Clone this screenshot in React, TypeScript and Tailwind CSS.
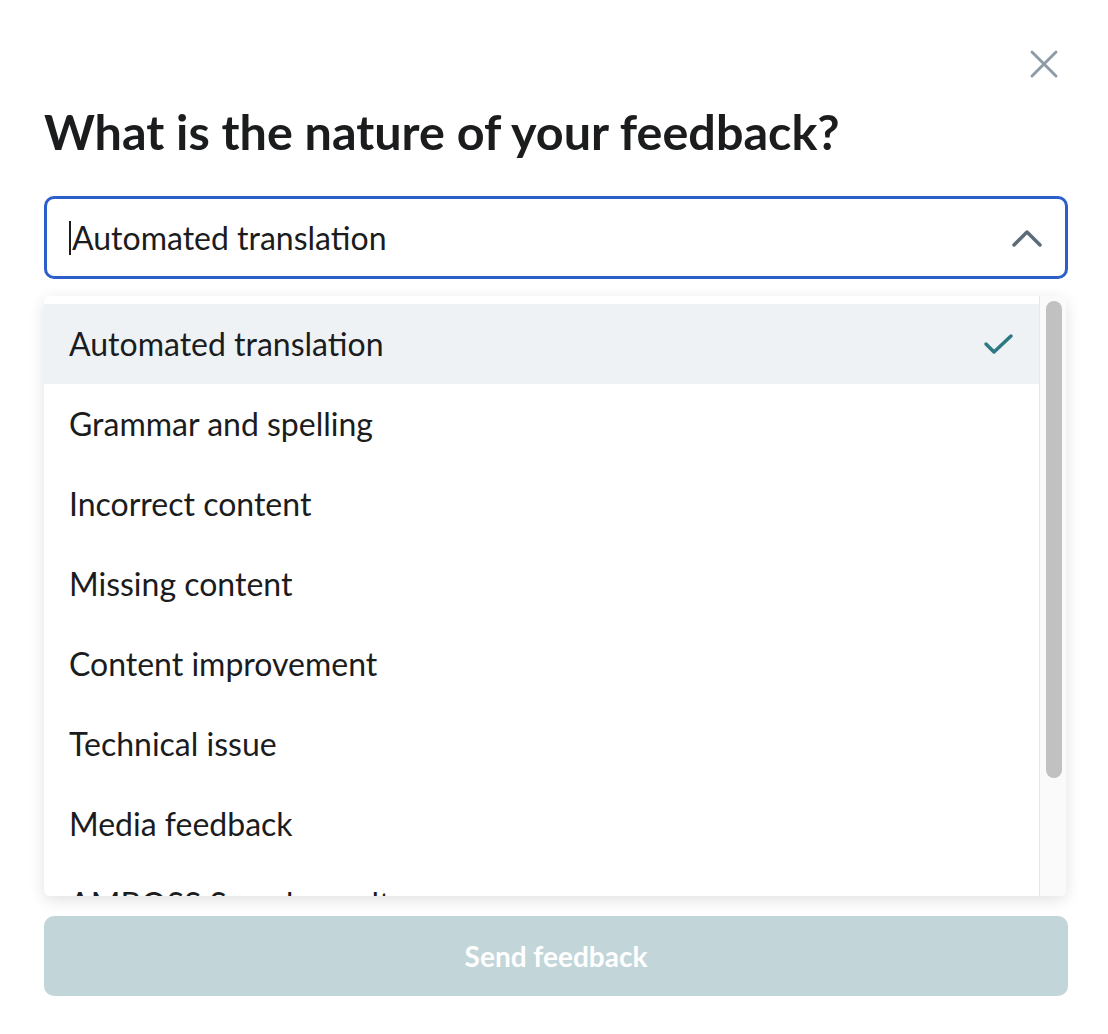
import React from "react";

const options = [
  "Automated translation",
  "Grammar and spelling",
  "Incorrect content",
  "Missing content",
  "Content improvement",
  "Technical issue",
  "Media feedback",
  "AMBOSS Search results",
];

export default function App() {
  return (
    <div
      className="w-[1108px] h-[1034px] bg-white relative overflow-hidden"
      style={{ fontFamily: "Lato, 'Noto Sans', sans-serif" }}
    >
      <div className="flex justify-end pt-[48px] pr-[48px]">
        <button className="w-[32px] h-[32px] flex items-center justify-center">
          <svg width="32" height="32" viewBox="0 0 32 32" fill="none">
            <path d="M4 4 L28 28 M28 4 L4 28" stroke="#8f9ba6" strokeWidth="3" strokeLinecap="round" />
          </svg>
        </button>
      </div>
      <div className="pl-[44px] pr-[40px]">
        <h1 className="text-[48.5px] leading-[58px] font-bold text-[#1b1c1d] mt-[22px]">
          What is the nature of your feedback?
        </h1>
        <div className="mt-[36px] h-[83px] border-[3px] border-[#2c5fc9] rounded-[10px] flex items-center pl-[22px] pr-[22px]">
          <span className="w-[2px] h-[34px] bg-[#1b1c1d] mr-[1px]" />
          <span className="text-[32px] text-[#1b1c1d] flex-1">Automated translation</span>
          <svg width="32" height="20" viewBox="0 0 32 20" fill="none">
            <path d="M3 17 L16 4 L29 17" stroke="#5b6b78" strokeWidth="3.5" strokeLinecap="round" strokeLinejoin="round" />
          </svg>
        </div>
        <div className="mt-[17px] h-[600px] w-[1022px] bg-white rounded-[6px] shadow-[0_4px_16px_rgba(0,0,0,0.12)] flex overflow-hidden">
          <div className="flex-1 pt-[8px] overflow-hidden">
            {options.map((o, i) => (
              <div
                key={o}
                className={
                  "h-[80px] flex items-center pl-[25px] pr-[24px] " +
                  (i === 0 ? "bg-[#eef2f5]" : "")
                }
              >
                <span className="text-[32px] text-[#1b1c1d] flex-1">{o}</span>
                {i === 0 && (
                  <svg width="32" height="24" viewBox="0 0 32 24" fill="none">
                    <path d="M3 12 L11 20 L28 4" stroke="#2e7883" strokeWidth="3.5" strokeLinecap="round" strokeLinejoin="round" />
                  </svg>
                )}
              </div>
            ))}
          </div>
          <div className="w-[27px] border-l border-[#e6e6e6] bg-[#fafafa] pt-[5px] pl-[6px]">
            <div className="w-[16px] h-[477px] rounded-full bg-[#c1c1c1]" />
          </div>
        </div>
        <button className="mt-[20px] w-full h-[80px] rounded-[10px] bg-[#c2d5d9] text-white text-[28px] font-bold">
          Send feedback
        </button>
      </div>
    </div>
  );
}
